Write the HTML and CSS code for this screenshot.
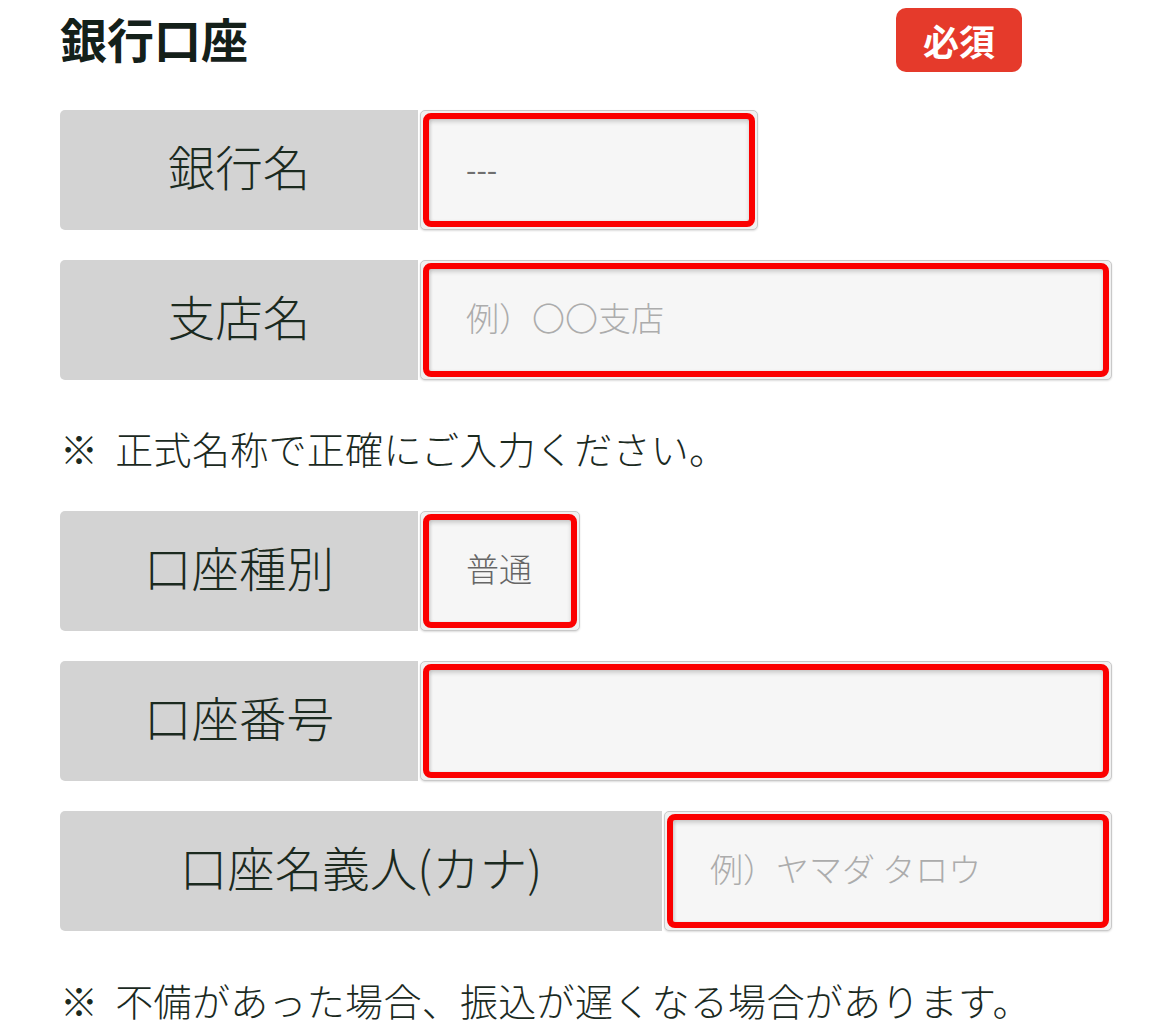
FILE: index.html
```html
<!DOCTYPE html>
<html lang="ja">
<head>
<meta charset="utf-8">
<title>銀行口座</title>
<link rel="stylesheet" href="styles.css">
</head>
<body>
<div class="page">
  <div class="header">
    <h2 class="title">銀行口座</h2>
    <span class="badge">必須</span>
  </div>

  <div class="row">
    <div class="label">銀行名</div>
    <div class="field field-bank">
      <div class="input"><span class="value dash">---</span></div>
    </div>
  </div>

  <div class="row">
    <div class="label">支店名</div>
    <div class="field field-wide">
      <div class="input"><span class="placeholder">例）〇〇支店</span></div>
    </div>
  </div>

  <p class="note note-first"><span class="mark">※</span>正式名称で正確にご入力ください。</p>

  <div class="row">
    <div class="label">口座種別</div>
    <div class="field field-type">
      <div class="input"><span class="value">普通</span></div>
    </div>
  </div>

  <div class="row">
    <div class="label">口座番号</div>
    <div class="field field-wide">
      <div class="input"></div>
    </div>
  </div>

  <div class="row">
    <div class="label label-holder">口座名義人(カナ)</div>
    <div class="field field-wide">
      <div class="input"><span class="placeholder">例）ヤマダ タロウ</span></div>
    </div>
  </div>

  <p class="note note-last"><span class="mark">※</span>不備があった場合、振込が遅くなる場合があります。</p>
</div>
</body>
</html>
```

FILE: styles.css
```css
html, body {
  margin: 0;
  padding: 0;
  background: #ffffff;
}

body {
  font-family: "Noto Sans CJK JP", "Noto Sans", sans-serif;
  color: #1b2a1f;
}

.page {
  width: 1052px;
  padding-left: 60px;
}

.header {
  width: 962px;
  height: 80px;
  display: flex;
  align-items: center;
  justify-content: space-between;
}

.title {
  margin: 0 0 6px;
  font-size: 47px;
  line-height: 1;
  font-weight: 700;
  color: #14201a;
}

.badge {
  width: 126px;
  height: 64px;
  border-radius: 10px;
  background: #e53a2b;
  color: #ffffff;
  font-size: 36px;
  font-weight: 700;
  display: flex;
  align-items: center;
  justify-content: center;
  line-height: 1;
}

.row {
  display: flex;
  height: 120px;
  gap: 2px;
  margin-top: 30px;
}

.label {
  width: 358px;
  flex: none;
  box-sizing: border-box;
  padding-bottom: 8px;
  background: #d3d3d3;
  border-radius: 5px 0 0 5px;
  display: flex;
  align-items: center;
  justify-content: center;
  font-size: 47.5px;
  font-weight: 300;
  line-height: 1;
  color: #1b2a1f;
}

.label-holder {
  width: 602px;
}

.field {
  box-sizing: border-box;
  border: 1px solid #c9c9c9;
  border-radius: 5px;
  padding: 2px;
  background: #f0f0f0;
  box-shadow: 0 1px 2px rgba(0, 0, 0, 0.14);
  display: flex;
}

.field-bank {
  width: 338px;
}

.field-type {
  width: 160px;
}

.field-wide {
  flex: 1;
}

.input {
  flex: 1;
  box-sizing: border-box;
  border: 6px solid #fb0000;
  border-radius: 8px;
  background: #f6f6f6;
  box-shadow: inset 0 3px 4px rgba(0, 0, 0, 0.16), inset 2px 0 3px rgba(0, 0, 0, 0.08);
  display: flex;
  align-items: center;
  padding-left: 37px;
  padding-bottom: 5px;
  font-size: 33px;
  font-weight: 300;
  line-height: 1;
}

.placeholder {
  color: #acacac;
}

.value {
  color: #666666;
}

.dash {
  color: #6f6f6f;
  font-size: 30px;
  font-weight: 400;
}

.note {
  margin: 0;
  font-size: 38px;
  letter-spacing: 0.3px;
  font-weight: 300;
  line-height: 52px;
  color: #1b2a1f;
}

.mark {
  margin-right: 17px;
}

.note-first {
  margin-top: 42px;
  margin-bottom: 37px;
}

.note-last {
  margin-top: 43px;
}
```
